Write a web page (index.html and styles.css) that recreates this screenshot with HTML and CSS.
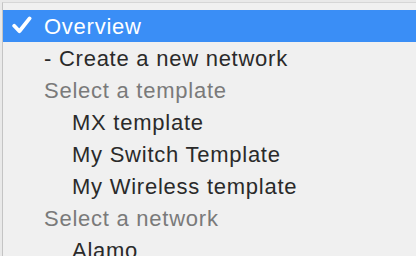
FILE: index.html
```html
<!DOCTYPE html>
<html lang="en">
<head>
  <meta charset="UTF-8">
  <title>Network menu</title>
  <link rel="stylesheet" href="styles.css">
</head>
<body>

<div class="page">
  <ul class="menu">
    <li class="item selected">
      <span class="check">
        <svg width="20" height="18" viewBox="0 0 20 18"><path d="M2.2 9.8 L7.4 15.2 L17.6 2.4" fill="none" stroke="#fff" stroke-width="3.8" stroke-linecap="round" stroke-linejoin="round"/></svg>
      </span>
      Overview
    </li>
    <li class="item">- Create a new network</li>
    <li class="item group">Select a template</li>
    <li class="item sub">MX template</li>
    <li class="item sub">My Switch Template</li>
    <li class="item sub">My Wireless template</li>
    <li class="item group">Select a network</li>
    <li class="item sub">Alamo</li>
  </ul>
</div>

</body>
</html>
```

FILE: styles.css
```css
/* Dropdown menu */
body {
  margin: 0;
  background: #e9e9e9;
  font-family: 'Liberation Sans', Arial, sans-serif;
}

.page {
  padding-left: 2px;
  padding-top: 2px;
  height: 254px;
  overflow: hidden;
}

.menu {
  list-style: none;
  margin: 0;
  padding: 7px 0 0 0;
  background: #f0f0f0;
  border-top: 1px solid #d6d6d6;
  border-left: 1px solid #c4c4c4;
  height: 100%;
}

.item {
  position: relative;
  height: 32px;
  line-height: 34px;
  padding-left: 41px;
  font-size: 22px;
  letter-spacing: 0.75px;
  color: #2a2a2a;
  white-space: nowrap;
}

.item.selected {
  background: #3a8ef6;
  color: #fff;
}

.item.group {
  color: #7a7a7a;
}

.item.sub {
  padding-left: 69px;
}

.check {
  position: absolute;
  left: 9px;
  top: 6px;
  line-height: 0;
}
```
